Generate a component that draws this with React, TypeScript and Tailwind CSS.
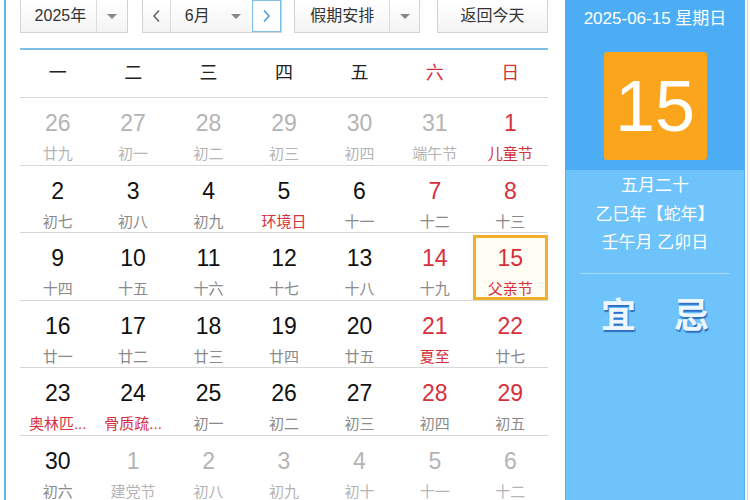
import React from "react";

type Day = {
  n: number;
  l: string;
  other?: boolean;
  redNum?: boolean;
  redLunar?: boolean;
  today?: boolean;
};

const weeks: Day[][] = [
  [
    { n: 26, l: "廿九", other: true },
    { n: 27, l: "初一", other: true },
    { n: 28, l: "初二", other: true },
    { n: 29, l: "初三", other: true },
    { n: 30, l: "初四", other: true },
    { n: 31, l: "端午节", other: true },
    { n: 1, l: "儿童节", redNum: true, redLunar: true },
  ],
  [
    { n: 2, l: "初七" },
    { n: 3, l: "初八" },
    { n: 4, l: "初九" },
    { n: 5, l: "环境日", redLunar: true },
    { n: 6, l: "十一" },
    { n: 7, l: "十二", redNum: true },
    { n: 8, l: "十三", redNum: true },
  ],
  [
    { n: 9, l: "十四" },
    { n: 10, l: "十五" },
    { n: 11, l: "十六" },
    { n: 12, l: "十七" },
    { n: 13, l: "十八" },
    { n: 14, l: "十九", redNum: true },
    { n: 15, l: "父亲节", redNum: true, redLunar: true, today: true },
  ],
  [
    { n: 16, l: "廿一" },
    { n: 17, l: "廿二" },
    { n: 18, l: "廿三" },
    { n: 19, l: "廿四" },
    { n: 20, l: "廿五" },
    { n: 21, l: "夏至", redNum: true, redLunar: true },
    { n: 22, l: "廿七", redNum: true },
  ],
  [
    { n: 23, l: "奥林匹...", redLunar: true },
    { n: 24, l: "骨质疏...", redLunar: true },
    { n: 25, l: "初一" },
    { n: 26, l: "初二" },
    { n: 27, l: "初三" },
    { n: 28, l: "初四", redNum: true },
    { n: 29, l: "初五", redNum: true },
  ],
  [
    { n: 30, l: "初六" },
    { n: 1, l: "建党节", other: true },
    { n: 2, l: "初八", other: true },
    { n: 3, l: "初九", other: true },
    { n: 4, l: "初十", other: true },
    { n: 5, l: "十一", other: true },
    { n: 6, l: "十二", other: true },
  ],
];

const weekdays = ["一", "二", "三", "四", "五", "六", "日"];

const Caret = () => (
  <span className="inline-block w-0 h-0 border-l-[5px] border-r-[5px] border-t-[5px] border-l-transparent border-r-transparent border-t-[#888]" />
);

const Chevron = ({ dir, color }: { dir: "l" | "r"; color: string }) => (
  <svg width="9" height="14" viewBox="0 0 9 14" fill="none">
    <path
      d={dir === "l" ? "M7 1.5 L2 7 L7 12.5" : "M2 1.5 L7 7 L2 12.5"}
      stroke={color}
      strokeWidth="1.6"
    />
  </svg>
);

const Cell = ({ d }: { d: Day }) => {
  const numColor = d.other
    ? "text-[#b4b4b4]"
    : d.redNum
    ? "text-[#d6303c]"
    : "text-[#111]";
  const lunarColor = d.redLunar ? "text-[#d6303c]" : d.other ? "text-[#b4b4b4]" : "text-[#8a8a8a]";
  return (
    <div className="flex justify-center">
      <div
        className={
          "flex flex-col items-center w-[75px] h-[65px] mt-[2px] " +
          (d.today ? "border-[3px] border-[#efb02e] bg-[#fffdf3]" : "border-[3px] border-transparent")
        }
      >
        <div className={"text-[23px] leading-none mt-[9px] " + numColor}>{d.n}</div>
        <div className={"text-[15px] leading-none mt-[11px] whitespace-nowrap " + lunarColor}>{d.l}</div>
      </div>
    </div>
  );
};

export default function App() {
  return (
    <div
      className="flex w-[750px] h-[500px] overflow-hidden bg-white"
      style={{ fontFamily: '"Liberation Sans", "Noto Sans CJK SC", sans-serif' }}
    >
      <div className="ml-[4px] w-[544px] border-l-2 border-[#62b6e2] pl-[14px] shrink-0">
        {/* toolbar */}
        <div className="flex items-start h-[49px] -mt-px text-[16px] text-[#333] whitespace-nowrap">
          <div className="flex w-[108px] h-[34px] border border-[#d2d2d2] bg-gradient-to-b from-white to-[#f4f4f4]">
            <div className="flex-1 flex items-center justify-center pl-1">2025年</div>
            <div className="w-[31px] border-l border-[#dcdcdc] flex items-center justify-center">
              <Caret />
            </div>
          </div>
          <div className="flex ml-[14px] w-[141px] h-[34px] border border-[#d2d2d2] bg-gradient-to-b from-white to-[#f4f4f4]">
            <div className="w-[28px] border-r border-[#dcdcdc] flex items-center justify-center">
              <Chevron dir="l" color="#666" />
            </div>
            <div className="flex-1 flex items-center pl-[14px]">6月</div>
            <div className="w-[24px] flex items-center justify-center mr-[4px]">
              <Caret />
            </div>
            <div className="w-[29px] border border-[#7fbde6] bg-white flex items-center justify-center">
              <Chevron dir="r" color="#4a9fd8" />
            </div>
          </div>
          <div className="flex ml-[12px] w-[126px] h-[34px] border border-[#d2d2d2] bg-gradient-to-b from-white to-[#f4f4f4]">
            <div className="flex-1 flex items-center justify-center">假期安排</div>
            <div className="w-[30px] border-l border-[#dcdcdc] flex items-center justify-center">
              <Caret />
            </div>
          </div>
          <div className="flex ml-[17px] w-[111px] h-[34px] border border-[#d2d2d2] bg-gradient-to-b from-white to-[#f4f4f4] items-center justify-center">
            返回今天
          </div>
        </div>

        {/* weekdays */}
        <div className="grid grid-cols-7 h-[50px] border-t-2 border-[#7cc0e4] border-b border-b-[#d8d8d8] items-center text-[18px]">
          {weekdays.map((w, i) => (
            <div key={w} className={"text-center " + (i >= 5 ? "text-[#d6303c]" : "text-[#222]")}>
              {w}
            </div>
          ))}
        </div>

        {/* days */}
        {weeks.map((row, r) => (
          <div key={r} className="grid grid-cols-7 h-[67.6px] border-b border-[#d8d8d8]">
            {row.map((d, i) => (
              <Cell key={i} d={d} />
            ))}
          </div>
        ))}
      </div>

      {/* right panel */}
      <div className="ml-[17px] w-[180px] shrink-0 flex flex-col border-x border-[#5aaee8] text-white">
        <div className="bg-[#4cadf4] h-[170px] flex flex-col items-center">
          <div className="mt-[6px] text-[17px] whitespace-nowrap">2025-06-15 星期日</div>
          <div className="mt-[20px] w-[103px] h-[108px] rounded-[3px] bg-[#fba51d] flex items-center justify-center text-[72px] leading-none">
            15
          </div>
        </div>
        <div className="flex-1 bg-[#6ec3fb] flex flex-col items-center">
          <div className="mt-[2px] text-[17px] leading-[28.5px] text-center whitespace-nowrap">
            <div>五月二十</div>
            <div>乙巳年【蛇年】</div>
            <div>壬午月 乙卯日</div>
          </div>
          <div className="mt-[15px] w-[150px] h-px bg-[#a6dcfd]" />
          <div
            className="flex gap-[38px] mt-[24px] text-[35px] leading-none font-bold text-[#eef7ff]"
            style={{ textShadow: "1px 2px 1px #2e6fc4" }}
          >
            <span>宜</span>
            <span>忌</span>
          </div>
        </div>
      </div>
      <div className="ml-[2px] w-px bg-[#d8d8d8]" />
    </div>
  );
}
